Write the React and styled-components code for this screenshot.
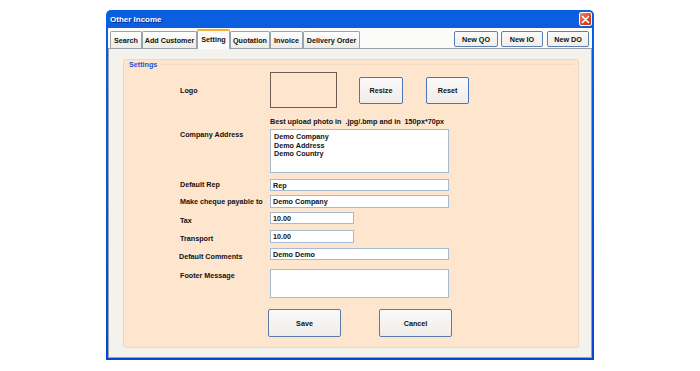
import React from 'react';
import styled, { createGlobalStyle } from 'styled-components';

const Global = createGlobalStyle`
  html, body { margin: 0; padding: 0; background: #ffffff; }
  body { font-family: "Liberation Sans", Arial, sans-serif; }
  * { box-sizing: border-box; }
`;

const Stage = styled.div`
  width: 700px;
  height: 371px;
  padding: 10px 0 0 106px;
`;

const Window = styled.div`
  width: 488px;
  height: 350px;
  display: flex;
  flex-direction: column;
  background: linear-gradient(#0a5fe0, #0846d2);
  border-radius: 5px 5px 0 0;
  padding: 0 2px 2px;
`;

const TitleBar = styled.div`
  height: 18px;
  display: flex;
  align-items: center;
  padding-left: 2px;
  color: #ffffff;
  font-weight: bold;
  font-size: 8px;
  text-shadow: 1px 1px 0 #0a2a8a;
`;

const CloseBtn = styled.div`
  margin-left: auto;
  width: 13px;
  height: 14px;
  border: 1px solid #ffffff;
  border-radius: 2px;
  background: linear-gradient(135deg, #f08a6a, #d9471f 60%, #c23a16);
  display: flex;
  align-items: center;
  justify-content: center;
`;

const Body = styled.div`
  flex: 1;
  display: flex;
  flex-direction: column;
  background: #fbfbf9;
`;

const TabStrip = styled.div`
  height: 20px;
  display: flex;
  align-items: flex-end;
  padding-left: 2px;
`;

const Tab = styled.div`
  position: relative;
  z-index: ${p => (p.$active ? 2 : 1)};
  width: ${p => p.$w}px;
  height: ${p => (p.$active ? 20 : 17)}px;
  margin-bottom: ${p => (p.$active ? -1 : 0)}px;
  border: 1px solid #9aa3ad;
  border-bottom: none;
  border-top: ${p => (p.$active ? '2px solid #f5b23c' : '1px solid #9aa3ad')};
  border-radius: 2px 2px 0 0;
  background: ${p => (p.$active ? '#fcfcfa' : 'linear-gradient(#ffffff, #ecebe5)')};
  font-size: 7.2px;
  font-weight: bold;
  color: #111;
  display: flex;
  align-items: ${p => (p.$active ? 'flex-start' : 'center')};
  padding-top: ${p => (p.$active ? 4 : 0)}px;
  justify-content: center;
  white-space: nowrap;
`;

const ToolButtons = styled.div`
  margin-left: auto;
  margin-right: 3px;
  align-self: center;
  display: flex;
  padding-top: 2px;
`;

const SmallButton = styled.div`
  width: ${p => p.$w}px;
  height: 16px;
  margin-left: ${p => p.$ml}px;
  border: 1px solid #5f7fb2;
  border-radius: 2px;
  background: linear-gradient(#fbfbf9, #efeee9);
  font-size: 7.2px;
  font-weight: bold;
  color: #111;
  display: flex;
  align-items: center;
  justify-content: center;
`;

const Pane = styled.div`
  flex: 1;
  border: 1px solid #9aa3ad;
  background: #f3f2ec;
  padding: 10px 12px 0 14px;
`;

const GroupBox = styled.div`
  background: #fde6cd;
  border: 1px solid #efd9be;
  border-radius: 3px;
  padding-bottom: 10px;
`;

const GroupHeader = styled.div`
  height: 9px;
  display: flex;
  align-items: center;
  padding-left: 5px;
`;

const Legend = styled.span`
  color: #1f50d8;
  font-size: 7.2px;
  font-weight: bold;
  padding-right: 3px;
`;

const LegendLine = styled.div`
  flex: 1;
  height: 1px;
  background: #f3dcc2;
  margin-right: 4px;
`;

const Form = styled.div`
  padding-left: 56px;
`;

const Row = styled.div`
  display: grid;
  grid-template-columns: 90px 1fr;
  align-items: ${p => (p.$center ? 'center' : 'start')};
  margin-top: ${p => p.$mt}px;
`;

const Label = styled.div`
  font-size: 7.2px;
  font-weight: bold;
  color: #111;
  line-height: ${p => p.$lh || 9}px;
  padding-top: ${p => p.$pt || 0}px;
  margin-left: ${p => p.$ml || 0}px;
  white-space: nowrap;
`;

const Hint = styled.div`
  font-size: 7.2px;
  font-weight: bold;
  color: #111;
  line-height: 10px;
  white-space: pre;
`;

const Field = styled.div`
  display: flex;
  align-items: center;
`;

const LogoBox = styled.div`
  width: 67px;
  height: 36px;
  border: 1px solid #6b5d50;
`;

const PushButton = styled.div`
  width: ${p => p.$w}px;
  height: ${p => p.$h}px;
  margin-left: ${p => p.$ml}px;
  border: 1px solid ${p => p.$bc || '#4f73b3'};
  border-radius: 2px;
  background: linear-gradient(#fafaf8, #eeede8);
  font-size: 7.2px;
  font-weight: bold;
  color: #111;
  display: flex;
  align-items: center;
  justify-content: center;
`;

const TextInput = styled.input`
  display: block;
  width: ${p => p.$w}px;
  height: ${p => p.$h}px;
  border: 1px solid #a7bad2;
  background: #ffffff;
  padding: 0 2px;
  margin: 0;
  font-family: "Liberation Sans", Arial, sans-serif;
  font-size: 7.2px;
  font-weight: bold;
  color: #111;
  outline: none;
`;

const TextArea = styled.textarea`
  display: block;
  width: 179px;
  height: ${p => p.$h}px;
  border: 1px solid #a7bad2;
  background: #ffffff;
  padding: 3px 3px;
  margin: 0;
  resize: none;
  overflow: hidden;
  font-family: "Liberation Sans", Arial, sans-serif;
  font-size: 7.2px;
  font-weight: bold;
  line-height: 8.7px;
  color: #111;
  outline: none;
`;

const ButtonRow = styled.div`
  display: flex;
  margin-top: 11px;
  padding-left: 88px;
`;

const tabs = [
  { t: 'Search', w: 32 },
  { t: 'Add Customer', w: 55 },
  { t: 'Setting', w: 33, active: true },
  { t: 'Quotation', w: 40 },
  { t: 'Invoice', w: 33 },
  { t: 'Delivery Order', w: 57 },
];

export default function App() {
  return (
    <>
      <Global />
      <Stage>
        <Window>
          <TitleBar>
            Other Income
            <CloseBtn>
              <svg width="9" height="9" viewBox="0 0 9 9">
                <path d="M1.5 1.5 L7.5 7.5 M7.5 1.5 L1.5 7.5" stroke="#fff" strokeWidth="1.6" strokeLinecap="round" />
              </svg>
            </CloseBtn>
          </TitleBar>
          <Body>
            <TabStrip>
              {tabs.map(tb => (
                <Tab key={tb.t} $w={tb.w} $active={tb.active}>{tb.t}</Tab>
              ))}
              <ToolButtons>
                <SmallButton $w={44} $ml={0}>New QO</SmallButton>
                <SmallButton $w={42} $ml={3}>New IO</SmallButton>
                <SmallButton $w={42} $ml={4}>New DO</SmallButton>
              </ToolButtons>
            </TabStrip>
            <Pane>
              <GroupBox>
                <GroupHeader>
                  <Legend>Settings</Legend>
                  <LegendLine />
                </GroupHeader>
                <Form>
                  <Row $mt={3} $center>
                    <Label>Logo</Label>
                    <Field>
                      <LogoBox />
                      <PushButton $w={44} $h={27} $ml={22}>Resize</PushButton>
                      <PushButton $w={43} $h={27} $ml={23}>Reset</PushButton>
                    </Field>
                  </Row>
                  <Row $mt={9}>
                    <span />
                    <Hint>{'Best upload photo in  .jpg/.bmp and in  150px*70px'}</Hint>
                  </Row>
                  <Row $mt={2}>
                    <Label $pt={1}>Company Address</Label>
                    <TextArea $h={44} readOnly defaultValue={'Demo Company\nDemo Address\nDemo Country'} />
                  </Row>
                  <Row $mt={6}>
                    <Label $lh={12}>Default Rep</Label>
                    <TextInput $w={179} $h={12} readOnly defaultValue="Rep" />
                  </Row>
                  <Row $mt={4}>
                    <Label $lh={13}>Make cheque payable to</Label>
                    <TextInput $w={179} $h={13} readOnly defaultValue="Demo Company" />
                  </Row>
                  <Row $mt={4}>
                    <Label $pt={4}>Tax</Label>
                    <TextInput $w={84} $h={12} readOnly defaultValue="10.00" />
                  </Row>
                  <Row $mt={5}>
                    <Label $pt={4}>Transport</Label>
                    <TextInput $w={84} $h={13} readOnly defaultValue="10.00" />
                  </Row>
                  <Row $mt={5}>
                    <Label $pt={4} $ml={-1}>Default Comments</Label>
                    <TextInput $w={179} $h={12} readOnly defaultValue="Demo Demo" />
                  </Row>
                  <Row $mt={8}>
                    <Label $pt={2}>Footer Message</Label>
                    <TextArea $h={29} readOnly defaultValue="" />
                  </Row>
                  <ButtonRow>
                    <PushButton $w={73} $h={28} $ml={0} $bc="#5d7aa8">Save</PushButton>
                    <PushButton $w={73} $h={28} $ml={38} $bc="#5d7aa8">Cancel</PushButton>
                  </ButtonRow>
                </Form>
              </GroupBox>
            </Pane>
          </Body>
        </Window>
      </Stage>
    </>
  );
}
